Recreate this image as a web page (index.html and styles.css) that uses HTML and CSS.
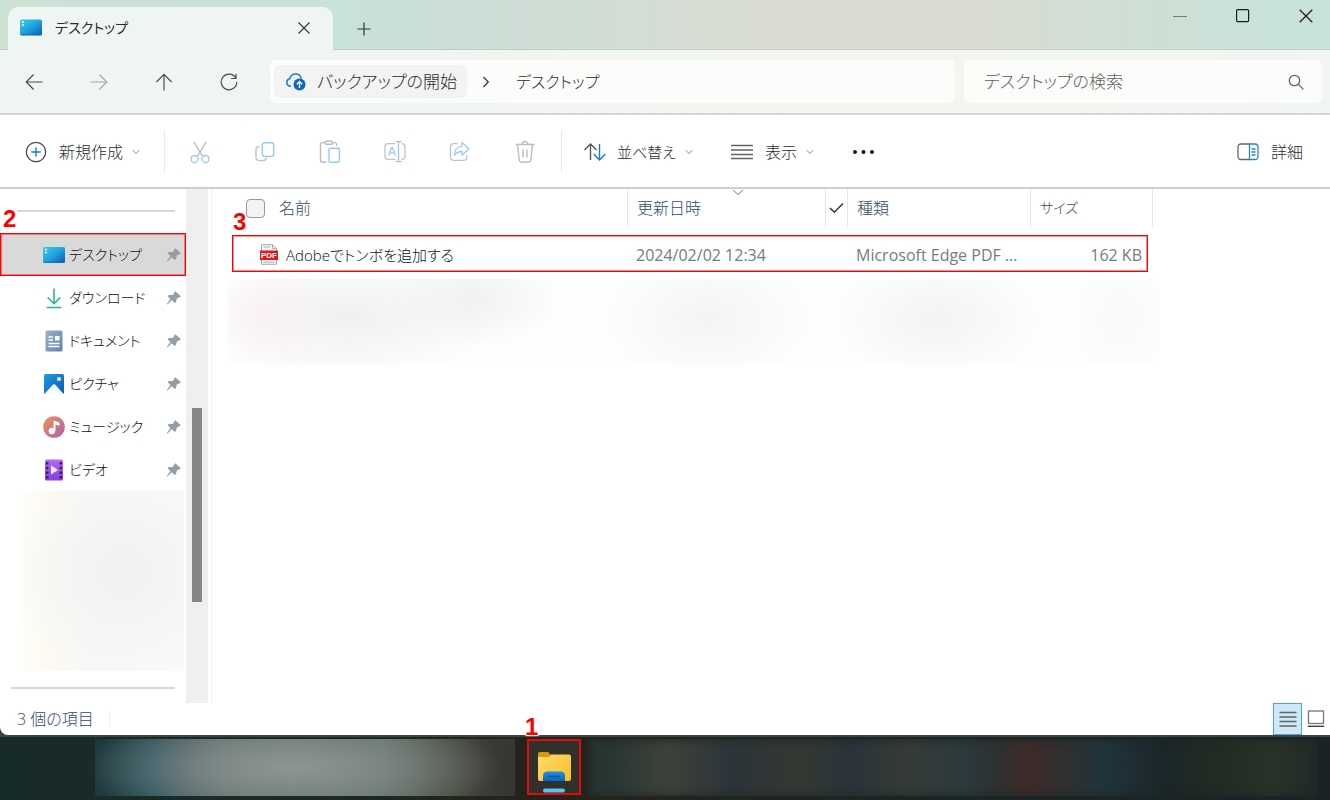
FILE: index.html
```html
<!DOCTYPE html>
<html lang="ja">
<head>
<meta charset="utf-8">
<title>デスクトップ</title>
<link rel="stylesheet" href="styles.css">
</head>
<body>
<svg width="0" height="0" class="defs" aria-hidden="true">
  <defs>
    <linearGradient id="deskGrad" x1="0" y1="0" x2="1" y2="1"><stop offset="0" stop-color="#38cfe8"/><stop offset=".5" stop-color="#1fa3db"/><stop offset="1" stop-color="#0b57b5"/></linearGradient>
    <linearGradient id="docGrad" x1="0" y1="0" x2="1" y2="1"><stop offset="0" stop-color="#98b2d2"/><stop offset="1" stop-color="#667fae"/></linearGradient>
    <linearGradient id="picGrad" x1="0" y1="0" x2="1" y2="1"><stop offset="0" stop-color="#1f9be0"/><stop offset="1" stop-color="#0a5cb8"/></linearGradient>
    <linearGradient id="musicGrad" x1="0" y1="0" x2="1" y2="1"><stop offset="0" stop-color="#f19350"/><stop offset="1" stop-color="#ab5fae"/></linearGradient>
    <linearGradient id="videoGrad" x1="0" y1="0" x2="0" y2="1"><stop offset="0" stop-color="#b56cf0"/><stop offset="1" stop-color="#8340dc"/></linearGradient>
    <linearGradient id="folderGrad" x1="0" y1="0" x2="1" y2="1"><stop offset="0" stop-color="#ffdc70"/><stop offset="1" stop-color="#f8bd25"/></linearGradient>
    <linearGradient id="pocketGrad" x1="0" y1="0" x2="0" y2="1"><stop offset="0" stop-color="#1b92e0"/><stop offset="1" stop-color="#0a65be"/></linearGradient>
    <symbol id="desktop" viewBox="0 0 22 17"><rect width="22" height="16" y=".5" rx="1.5" fill="url(#deskGrad)"/><path d="M2 3h2M2 6h2" stroke="#fff" stroke-width="1.6"/><path d="M1 15.7h20" stroke="#1470b0"/></symbol>
    <symbol id="chevron" viewBox="0 0 8 6"><path d="M.8 1.2 4 4.6 7.2 1.2" fill="none" stroke="#8a8a8a"/></symbol>
    <symbol id="pin" viewBox="0 0 16 16"><path d="M9.3 1.2 14.9 6.3 13.6 7.3 11 8.2 9.8 12.3 8.9 13.1 5.7 10.2 1.5 14.6.8 14.1 4.4 9 1.7 6.3 2.8 5.1 6.9 4.9 8.4 2.3Z" fill="#949ea6"/></symbol>
  </defs>
</svg>

<main class="window">
  <header class="titlebar">
    <div class="tab">
      <svg class="i-desktop" aria-hidden="true"><use href="#desktop"/></svg>
      <span class="tab-title">デスクトップ</span>
      <button class="btn" aria-label="タブを閉じる"><svg width="14" height="14" fill="none" stroke="#333" stroke-width="1.1"><path d="m1.5 1.500 11 11M12.500 1.500l-11 11"/></svg></button>
    </div>
    <button class="btn new-tab" aria-label="新しいタブ"><svg width="14" height="14" fill="none" stroke="#333" stroke-width="1.2"><path d="M7 .5v13M.5 7h13"/></svg></button>
    <div class="controls">
      <button class="btn" aria-label="最小化"><svg width="14" height="14" stroke="#737b77"><path d="M0 7.5h14"/></svg></button>
      <button class="btn" aria-label="最大化"><svg width="14" height="14" fill="none" stroke="#1d1d1d" stroke-width="1.2"><rect x=".6" y=".6" width="12" height="12" rx="1"/></svg></button>
      <button class="btn" aria-label="閉じる"><svg width="14" height="14" fill="none" stroke="#1d1d1d" stroke-width="1.3"><path d="m.7.7 12.6 12.6M13.3.7.7 13.3"/></svg></button>
    </div>
  </header>

  <nav class="navbar" aria-label="アドレス">
    <div class="arrows">
      <button class="btn" aria-label="戻る"><svg width="18" height="18" fill="none" stroke="#4b4f4d" stroke-width="1.2"><path d="M17.5 9H1.2M8.6 1.5 1.2 9l7.4 7.5"/></svg></button>
      <button class="btn" aria-label="進む"><svg width="18" height="18" fill="none" stroke="#a6aaa8" stroke-width="1.2"><path d="M.5 9h16.3M9.4 1.5 16.8 9l-7.4 7.5"/></svg></button>
      <button class="btn" aria-label="上へ"><svg width="18" height="18" fill="none" stroke="#4b4f4d" stroke-width="1.2"><path d="M9 17.5V1.5M1.4 9 9 1.4 16.6 9"/></svg></button>
      <button class="btn" aria-label="最新の情報に更新"><svg width="18" height="18" fill="none" stroke="#4b4f4d" stroke-width="1.2"><path d="M15.6 4.8A7.8 7.8 0 1 0 16.8 9M16 .8v4.7h-5"/></svg></button>
    </div>
    <div class="address">
      <button class="crumb root">
        <svg width="22" height="20" viewBox="0 0 22 20" fill="none"><path d="M6 14.2H4.8A3.8 3.8 0 0 1 4.7 6.8 6 6 0 0 1 16.4 6.6" stroke="#2878c5" stroke-width="1.5"/><circle cx="14.5" cy="12.5" r="6" fill="#0b69c4"/><path d="M14.5 16V9.7m-2.7 2.5 2.7-2.7 2.7 2.7" stroke="#fff" stroke-width="1.4"/></svg>
        <span>バックアップの開始</span>
      </button>
      <svg class="crumb-sep" width="8" height="12" fill="none" stroke="#444" stroke-width="1.4"><path d="m1.5 1 4.7 5-4.7 5"/></svg>
      <button class="crumb current">デスクトップ</button>
    </div>
    <div class="search">
      <input type="search" aria-label="デスクトップの検索" placeholder="デスクトップの検索">
      <svg width="16" height="16" fill="none" stroke="#626562" stroke-width="1.3"><circle cx="6.5" cy="6.5" r="5.2"/><path d="m10.4 10.4 5 5"/></svg>
    </div>
  </nav>

  <div class="toolbar">
    <button class="tool create">
      <svg width="22" height="22" fill="none"><circle cx="11" cy="11" r="9.7" stroke="#4a4a4a" stroke-width="1.3"/><path d="M11 6.3v9.4M6.3 11h9.4" stroke="#1581d2" stroke-width="1.4"/></svg>
      <span>新規作成</span><svg class="chev"><use href="#chevron"/></svg>
    </button>
    <div class="actions">
      <button class="btn" aria-label="切り取り" disabled><svg width="22" height="24" fill="none" stroke-width="1.3"><path d="m5 2 8.4 14.2M17 2 8.6 16.2" stroke="#b9b9b9"/><circle cx="5.6" cy="19" r="3.5" stroke="#94cbf5"/><circle cx="16.4" cy="19" r="3.5" stroke="#94cbf5"/></svg></button>
      <button class="btn" aria-label="コピー" disabled><svg width="22" height="24" fill="none" stroke-width="1.4"><path d="M5.5 6.5C3 6.5 2 7.8 2 9.5V17c0 2.4 1.4 3.6 3.6 3.6H9c1.7 0 2.8-.7 3.3-2.6" stroke="#c2c2c2"/><rect x="8.3" y="2.7" width="11.5" height="13.8" rx="2.7" stroke="#94cbf5"/></svg></button>
      <button class="btn" aria-label="貼り付け" disabled><svg width="22" height="24" fill="none" stroke-width="1.4"><path d="M7.5 22.3H3.3C2 22.3 1.5 21.5 1.5 20.5V4.5C1.5 3.2 2.2 2.6 3.3 2.6H6M13.5 2.6h2.3c1.2 0 1.8.7 1.8 1.900V6" stroke="#bdbdbd"/><rect x="6" y="1.3" width="7.7" height="3" rx="1.5" stroke="#bdbdbd"/><rect x="10" y="8.3" width="10.5" height="14" rx="1.5" stroke="#94cbf5"/></svg></button>
      <button class="btn" aria-label="名前の変更" disabled><svg width="22" height="24" fill="none" stroke-width="1.3"><path d="M11.5 3.7H4C1.8 3.7 1 5 1 6.5v9.8c0 2.2 1.2 3 3 3h7.5M17.5 3.7c2.6 0 3.5 1.4 3.5 3v9.5c0 2.1-1.2 3.1-3.5 3.1" stroke="#c2c2c2"/><path d="M14.5 1.7v20M11.5 1.7h6M11.5 21.7h6M4.5 15.5 7.8 7.3h.5l3.3 8.2M5.7 12.8h4.7" stroke="#94cbf5"/></svg></button>
      <button class="btn" aria-label="共有" disabled><svg width="22" height="24" fill="none" stroke-width="1.3"><path d="M8.5 3.7H5c-2.3 0-3.5 1-3.5 3v10c0 2.3 1.2 3.6 3.5 3.6h9.5c2.2 0 3.3-1.3 3.3-3.3v-2" stroke="#c2c2c2"/><path d="M13 2.5 20 8.7 13 15v-3.5c-3.5 0-5.7 1-7.7 3.7.2-5 3-8.8 7.7-9.1Z" stroke="#94cbf5" stroke-linejoin="round"/></svg></button>
      <button class="btn" aria-label="削除" disabled><svg width="22" height="24" fill="none" stroke="#bdbdbd" stroke-width="1.4"><path d="M1.7 4.5h18.6M8 4.5a3 3 0 0 1 6 0M3.5 4.5l1.7 15.3c.2 1.3 1 2.2 2.3 2.2h7c1.3 0 2.1-.9 2.3-2.2L18.5 4.5M9 9.5v8M13 9.5v8"/></svg></button>
    </div>
    <button class="tool sort">
      <svg width="24" height="20" fill="none" stroke-width="1.4"><path d="M7.5 18V2M1.5 8l6-6 6 6" stroke="#555"/><path d="M16.5 2v16M10.7 12l5.8 6 5.8-6" stroke="#1d7dcc"/></svg>
      <span>並べ替え</span><svg class="chev"><use href="#chevron"/></svg>
    </button>
    <button class="tool">
      <svg width="22" height="16" stroke="#626462" stroke-width="1.3"><path d="M0 1.5h22M0 6h22M0 10.5h22M0 14.5h22"/></svg>
      <span>表示</span><svg class="chev"><use href="#chevron"/></svg>
    </button>
    <button class="btn more" aria-label="もっと見る"><svg width="24" height="6" fill="#1b1b1b"><circle cx="3" cy="3" r="2"/><circle cx="11.5" cy="3" r="2"/><circle cx="20" cy="3" r="2"/></svg></button>
    <button class="tool details">
      <svg width="22" height="18" fill="none" stroke-width="1.3"><path d="M12.5 1H4C2 1 1 2 1 4v9c0 2 1 3.500 3 3.500h8.5" stroke="#666"/><path d="M12.5 1H18c2 0 3 1 3 3v9c0 2-1 3.500-3 3.500h-5.500ZM14.5 6h4M14.5 9h4M14.5 12h4" stroke="#2786d8"/></svg>
      <span>詳細</span>
    </button>
  </div>

  <div class="body">
    <aside class="sidebar">
      <div class="places">
        <hr class="rule top">
        <ul>
          <li><a href="#" class="place selected"><svg class="p-icon"><use href="#desktop"/></svg><span>デスクトップ</span><svg class="pin"><use href="#pin"/></svg></a><b class="step">2</b></li>
          <li><a href="#" class="place"><svg class="p-icon" viewBox="0 0 22 22" fill="none" stroke="#25b395" stroke-width="1.5"><path d="M11 1.5v15M4.700 10.500l6.300 6.200 6.300-6.200M3.700 20.500h14.600"/></svg><span>ダウンロード</span><svg class="pin"><use href="#pin"/></svg></a></li>
          <li><a href="#" class="place"><svg class="p-icon" viewBox="0 0 22 22"><rect x="2.5" y=".5" width="17" height="21" rx="1.5" fill="url(#docGrad)"/><path d="M5.5 7H10M5.500 10H10M5.500 13.500h11M5.500 16.500h11" stroke="#fff" stroke-width="1.3"/><rect x="12" y="6" width="4.5" height="4.5" fill="#fff"/></svg><span>ドキュメント</span><svg class="pin"><use href="#pin"/></svg></a></li>
          <li><a href="#" class="place"><svg class="p-icon" viewBox="0 0 22 22"><rect x="1" y="1" width="20" height="20" rx="1.5" fill="url(#picGrad)"/><path d="M1.5 21 9.500 12q1.500-1.500 3 0L20.500 21Z" fill="#f6fbff"/><circle cx="16" cy="6" r="2" fill="#f2faff"/></svg><span>ピクチャ</span><svg class="pin"><use href="#pin"/></svg></a></li>
          <li><a href="#" class="place"><svg class="p-icon" viewBox="0 0 22 22"><circle cx="11" cy="11" r="10.8" fill="url(#musicGrad)"/><circle cx="8.8" cy="15" r="3.2" fill="#fff"/><path d="M10.5 15V4.500l6 2v3.200l-4-1.300V15Z" fill="#fff"/></svg><span>ミュージック</span><svg class="pin"><use href="#pin"/></svg></a></li>
          <li><a href="#" class="place"><svg class="p-icon" viewBox="0 0 22 22"><rect x="2" y=".5" width="18" height="21" rx="1.5" fill="url(#videoGrad)"/><path d="M4.200 3v17M17.800 3v17" stroke="#421878" stroke-width="2.5" stroke-dasharray="2.5 2.2"/><path d="M8 6.500 15 11l-7 4.500Z" fill="#f3eaff"/></svg><span>ビデオ</span><svg class="pin"><use href="#pin"/></svg></a></li>
        </ul>
        <div class="redacted side-blur"></div>
        <hr class="rule bottom">
      </div>
      <div class="scrollbar"><div class="thumb"></div></div>
    </aside>

    <section class="files">
      <table>
        <colgroup><col class="c-name"><col class="c-date"><col class="c-state"><col class="c-type"><col class="c-size"></colgroup>
        <thead>
          <tr>
            <th><label class="head name"><input type="checkbox"><span>名前</span></label></th>
            <th><div class="head">更新日時<svg class="sort-mark" viewBox="0 0 12 7" fill="none" stroke="#777"><path d="m1 1 5 4.500L11 1"/></svg></div></th>
            <th aria-label="状態"><div class="head state"><svg width="15" height="12" fill="none" stroke="#333" stroke-width="1.4"><path d="m1 6 4.300 4.300L14 1.500"/></svg></div></th>
            <th><div class="head">種類</div></th>
            <th><div class="head kana">サイズ</div></th>
          </tr>
        </thead>
        <tbody>
          <tr class="file">
            <td>
              <div class="file-name">
                <svg width="18" height="21" viewBox="0 0 18 21"><path d="M1.5.7h11l4 4v15.600h-15Z" fill="#fafafa" stroke="#a8a8a8"/><path d="M12.500.7v4h4M3.500 3h7M3.500 18.200h11" fill="none" stroke="#aaa"/><rect y="6.5" width="18" height="9.5" fill="#df1919"/><text x="9" y="14" class="pdf" text-anchor="middle">PDF</text></svg>
                <span>Adobeでトンボを追加する</span>
              </div>
              <span class="mark"><b class="step">3</b></span>
            </td>
            <td>2024/02/02 12:34</td>
            <td></td>
            <td>Microsoft Edge PDF ...</td>
            <td class="size">162 KB</td>
          </tr>
        </tbody>
      </table>
      <div class="redacted file-blur"></div>
    </section>
  </div>

  <footer class="status">
    <span class="count">3 個の項目</span>
    <div class="views">
      <button class="view on" aria-label="詳細表示"><svg width="20" height="20" stroke="#5d6664" stroke-width="1.3"><path d="M1.5 3.500h17M1.500 8h17M1.500 12.500h17M1.500 17h17"/></svg></button>
      <button class="view" aria-label="大アイコン"><svg width="18" height="18" fill="none"><rect x="1.5" y="1" width="15" height="12.5" stroke="#777" stroke-width="1.3"/><path d="M.8 16.300h16.400" stroke="#333" stroke-width="1.3"/></svg></button>
    </div>
  </footer>
</main>

<div class="taskbar">
  <div class="strip left"></div>
  <button class="app" aria-label="エクスプローラー">
    <svg width="34" height="42" viewBox="0 0 34 42"><path d="M1 3Q1 1 3 1h8l3 3h-1v6H1Z" fill="#d99a0a"/><path d="M1 6h11l2-2.500h18q2 0 2 2V28q0 2-2 2H3q-2 0-2-2Z" fill="url(#folderGrad)"/><path d="M6 30v-5q0-4.500 4.500-4.500h13Q28 20.500 28 25v5Z" fill="url(#pocketGrad)"/><path d="M11 25.500h12" stroke="#0a4d98" stroke-width="1.5"/><rect x="6" y="37.5" width="22" height="4" rx="2" fill="#59c3f4"/></svg>
    <b class="step">1</b>
  </button>
  <div class="strip right"></div>
</div>
</body>
</html>
```
FILE: styles.css
```css
* { box-sizing: border-box; }

body {
  margin: 0;
  min-height: 100vh;
  display: flex;
  flex-direction: column;
  background: #35403c;
  color: #2b2b2b;
  font-family: "Open Sans", "Noto Sans CJK JP", sans-serif;
  font-size: 16px;
  font-weight: 300;
  font-feature-settings: "palt";
  line-height: 24px;
}

.defs { position: absolute; }
svg { display: block; flex: none; }
button { padding: 0; border: 0; background: none; font: inherit; font-feature-settings: inherit; color: inherit; }
.btn { display: grid; place-items: center; }
.step {
  position: absolute;
  font: bold 24px/24px "Liberation Sans", sans-serif;
  color: #f00;
  text-shadow: 1px 1px 1px #fff, -1px -1px 1px #fff, 1px -1px 1px #fff, -1px 1px 1px #fff;
}

.window { flex: 1; display: flex; flex-direction: column; background: #fff; border-radius: 0 0 0 8px; }

/* title bar */
.titlebar {
  display: flex;
  height: 50px;
  padding: 7px 0 0 8px;
  background: linear-gradient(90deg, #cee1d5, #c8e2da 24%, #ccded6 36%, #dadcd2 60%, #d9dbd1 73%, #cde0d6 88%, #c7e3da);
  box-shadow: inset 0 -1px #c2cdc2;
}
.tab {
  display: flex;
  align-items: center;
  width: 325px;
  padding: 0 22px 2px 12px;
  border-radius: 10px 10px 0 0;
  background: #eff5f3;
}
.i-desktop { width: 22px; height: 17px; margin-right: 13px; }
.tab-title { flex: 1; font-size: 14px; font-weight: 400; }
.new-tab { width: 62px; }
.controls { display: flex; gap: 49px; margin-left: auto; padding: 2px 17px 0 0; align-items: flex-start; }

/* navigation row */
.navbar {
  display: grid;
  grid-template-columns: auto 685fr 367fr;
  align-items: center;
  height: 65px;
  padding: 0 8px 0 25px;
  border-bottom: 2px solid #ced9d0;
  background: linear-gradient(90deg, #eff5f3, #f0f5f3 25%, #f4f5f1 60%, #f3f5f1 80%, #f1f5f3);
  font-size: 17px;
}
.arrows { display: flex; gap: 47px; margin-right: 32px; }
.address, .search { display: flex; align-items: center; height: 43px; border-radius: 6px; background: #fcfdfb; min-width: 0; }
.address { padding: 0 4px; }
.search { margin-left: 9px; padding: 0 18px 0 20px; }
.search input {
  flex: 1;
  min-width: 0;
  padding: 0;
  border: 0;
  outline: 0;
  background: none;
  font: inherit;
  font-feature-settings: inherit;
  color: #333;
}
.search input::placeholder { color: #5c5e5c; opacity: 1; }
.root { display: flex; align-items: center; gap: 10px; height: 33px; padding: 0 10px 0 11px; border-radius: 6px; background: #f2f3f2; }
.current { font-size: 16px; }
.crumb-sep { margin: 0 26px 0 15px; }

/* command bar */
.toolbar { display: flex; align-items: center; height: 74px; padding: 1px 27px 0 25px; border-bottom: 2px solid #c9d2cb; }
.tool { display: flex; align-items: center; }
.tool span { margin-left: 12px; }
.chev { width: 8px; height: 6px; margin-left: 9px; }
.actions {
  display: flex;
  align-items: center;
  gap: 43px;
  height: 43px;
  margin: 0 21px 0 24px;
  padding: 0 25px 0 24px;
  border: solid #e9e9e9;
  border-width: 0 1px;
}
.sort { margin-right: 38px; font-size: 15px; }
.tool.sort span { margin-left: 10px; }
.more { margin-left: 38px; }
.details { margin-left: auto; }

/* body */
.body { flex: 1; display: flex; }
.sidebar { display: flex; width: 212px; border-right: 1px solid #f1f1f1; }
.places { flex: 1; min-width: 0; }
.places ul { margin: 0; padding: 0; list-style: none; }
.places li { position: relative; }
.places li .step { left: 3px; top: -26px; }
.rule { height: 2px; border: 0; background: #d7d7d7; }
.top { margin: 21px 11px 21px 17px; }
.bottom { margin: 16px 11px 14px; }
.place { display: flex; align-items: center; height: 43px; padding: 0 4px 0 43px; color: #111; font-size: 14px; text-decoration: none; }
.place span { flex: 1; margin-left: 4px; white-space: nowrap; }
.selected { border: 1px solid #f00; padding: 0 3px 0 42px; background: #d9d9d9; box-shadow: inset 0 0 0 1px #ff000070; }
.p-icon { width: 22px; height: 22px; }
.pin { width: 16px; height: 16px; }
.side-blur { height: 180px; margin: 0 2px 0 20px; background: radial-gradient(ellipse at 65% 45%, #f0f1f1, #f5f5f5aa 50%, transparent 80%), linear-gradient(90deg, #fefefb, #fcfaf0 18%, #f8f8f7 45%, #fafafa); }
.scrollbar { width: 22px; margin-right: 3px; padding: 219px 6px 0; background: #efefef; }
.thumb { height: 194px; background: #868686; }

/* file list */
.files { flex: 1; min-width: 0; padding-left: 20px; }
table { width: 921px; table-layout: fixed; border-collapse: collapse; }
.c-name { width: 396px; }
.c-date { width: 198px; }
.c-state { width: 22px; }
.c-type { width: 183px; }
.c-size { width: 122px; }
th { padding: 0 0 8px; text-align: left; font-weight: 300; color: #364a66; }
.head { position: relative; display: flex; align-items: center; height: 38px; padding-left: 9px; border-right: 1px solid #e5e5e5; }
.kana { font-size: 14px; }
.name { gap: 14px; padding-left: 14px; }
.name input { appearance: none; width: 19px; height: 19px; margin: 0; border: 1px solid #999; border-radius: 4px; background: #f3f3f3; }
.state { justify-content: center; padding: 0; }
.sort-mark { position: absolute; left: 104px; top: 0; width: 12px; height: 7px; }
.file { position: relative; height: 37px; }
.file td { padding: 2px 0 0 8px; white-space: nowrap; color: #7a7a7a; font-weight: 400; }
.file td:first-child { padding-left: 28px; color: #111; font-size: 15px; font-weight: 300; }
.file .size { padding: 2px 11px 0 0; text-align: right; }
.file-name { display: flex; align-items: center; gap: 8px; }
.pdf { font: bold 8px "Liberation Sans", sans-serif; fill: #fff; }
.mark { position: absolute; inset: 0 5px 0 0; border: 1px solid #f00; box-shadow: inset 0 0 0 1px #ff000070; pointer-events: none; }
.mark .step { left: 0; top: -26px; }
.file-blur {
  width: 932px;
  height: 85px;
  margin: 7px 0 0 -4px;
  background:
    radial-gradient(ellipse 60px 60px at 40px 38px, #fbeded99, transparent),
    radial-gradient(ellipse 150px 65px at 120px 38px, #f0f0f0, transparent),
    radial-gradient(ellipse 90px 50px at 245px 20px, #f1f1f1, transparent),
    radial-gradient(ellipse 110px 70px at 480px 40px, #f4f4f4, transparent),
    radial-gradient(ellipse 110px 65px at 710px 40px, #f3f3f3, transparent),
    radial-gradient(ellipse 55px 70px at 892px 40px, #f9f9f8, transparent),
    #fefefe;
}

/* status bar */
.status { display: flex; justify-content: space-between; height: 32px; }
.count { align-self: center; height: 16px; padding: 0 15px 0 17px; border-right: 1px solid #eee; line-height: 16px; color: #364a66; }
.views { display: flex; }
.view { display: grid; place-items: center; width: 28px; }
.on { width: 29px; border: 1px solid #4ba4e4; background: #cee8f7; }

/* taskbar */
.taskbar {
  display: grid;
  grid-template-columns: 432fr 54px 737fr;
  height: 65px;
  padding: 2px 12px 4px 95px;
  border-top: 2px solid #3b4542;
  background: linear-gradient(90deg, #172b2a, #1a2a27 20%, #24231d 38%, #24231d 50%, #1d2523 62%, #1b2425);
}
.app { position: relative; display: grid; place-items: center; height: 56px; padding-top: 10px; border: 2px solid #e30b0b; background: #31312b; }
.app .step { left: -4px; top: -26px; }
.left { margin-right: 12px; background: radial-gradient(ellipse 50% 100% at 47% 50%, #8e9695, #879190cc 35%, transparent), linear-gradient(90deg, #1d373a, #28505a 14%, #435a5d 22%, #5c6a65 32%, #5f6d66 68%, #4c5345 82%, #3a3833 95%, #373630); }
.right { margin-left: 7px; background: linear-gradient(90deg, #263230, #2a3734 4%, #3d413a 11%, #2c3439 20%, #343832 29%, #2a333a 36%, #363b36 44%, #2b3a3d 51%, #2e3131 56%, #3d2b29 60%, #2d3031 66%, #20333c 71%, #1b2628 79%, #222b23 86%, #293229 94%, #202a26); box-shadow: inset 0 0 10px #1d2624; }
```
